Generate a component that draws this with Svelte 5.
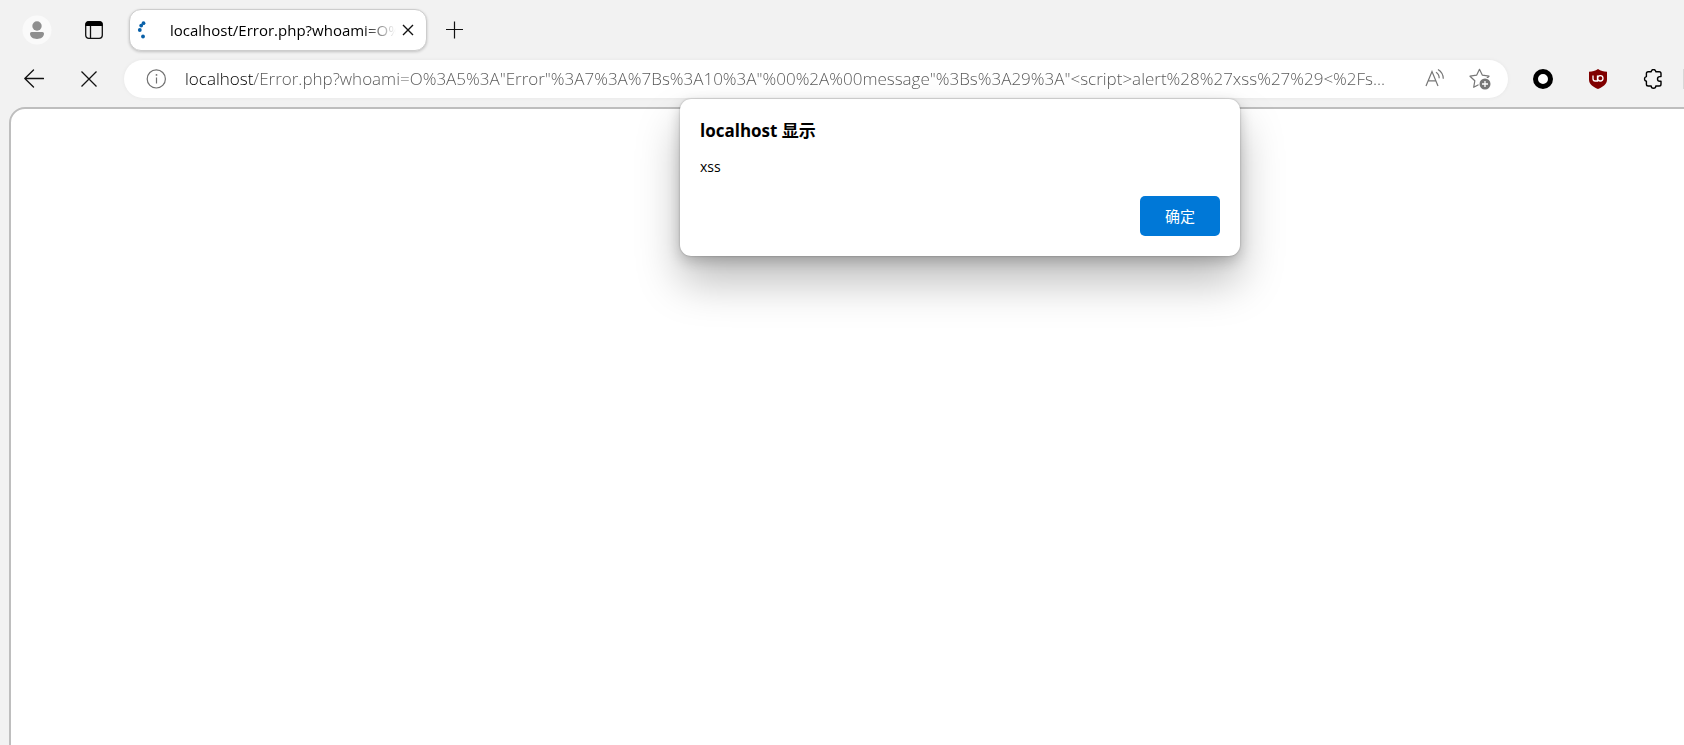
<script>
  const tabTitle = 'localhost/Error.php?whoami=O%';
  let url = $state(
    'localhost/Error.php?whoami=O%3A5%3A"Error"%3A7%3A%7Bs%3A10%3A"%00%2A%00message"%3Bs%3A29%3A"<' +
      'script>alert%28%27xss%27%29<%2Fs...'
  );
</script>

<div class="browser">
  <header>
    <div class="tabs">
      <button class="avatar" aria-label="Profile">
        <svg width="30" height="30" viewBox="0 0 30 30">
          <circle cx="15" cy="15" r="14.5" fill="#fafafa" />
          <circle cx="15" cy="11" r="4.7" fill="#8f8f8f" />
          <path d="M9.6 17h10.8q1.6 0 1.6 1.6c0 3.6-3 5.4-7 5.4s-7-1.800-7-5.400q0-1.600 1.600-1.600z" fill="#8f8f8f" />
        </svg>
      </button>
      <button class="actions" aria-label="Tab actions">
        <svg width="20" height="20" viewBox="0 0 20 20">
          <rect x="1.700" y="1.700" width="16.600" height="16.600" rx="3" fill="none" stroke="#111" stroke-width="1.300" />
          <path d="M1.500 6V4.500a3.300 3.300 0 0 1 3.300-3.300h10.400a3.300 3.300 0 0 1 3.300 3.300V6z" fill="#000" />
          <path d="M6.500 6v12" stroke="#111" stroke-width="1.300" />
        </svg>
      </button>
      <div class="tab">
        <svg width="20" height="20" viewBox="0 0 20 20" fill="#0860a8" aria-hidden="true">
          <circle cx="13.500" cy="3.200" r="1.900" />
          <circle cx="11.200" cy="5.600" r="1.900" />
          <circle cx="9.800" cy="10" r="1.900" />
          <circle cx="13" cy="16.500" r="1.900" />
        </svg>
        <span class="title">{tabTitle}</span>
        <button aria-label="Close tab">
          <svg width="12" height="12" viewBox="0 0 12 12">
            <path d="M1 1l10 10M11 1L1 11" stroke="#111" stroke-width="1.400" />
          </svg>
        </button>
      </div>
      <button class="new" aria-label="New tab">
        <svg width="18" height="18" viewBox="0 0 18 18">
          <path d="M8.500 .5v17M0 8.500h17" stroke="#111" stroke-width="1.200" />
        </svg>
      </button>
    </div>

    <div class="toolbar">
      <button aria-label="Back">
        <svg width="20" height="20" viewBox="0 0 20 20" fill="none" stroke="#111" stroke-width="1.300" stroke-linecap="round" stroke-linejoin="round">
          <path d="M9.500 1L.8 9.500l8.700 8.500M.8 9.500h18.700" />
        </svg>
      </button>
      <button class="stop" aria-label="Stop loading">
        <svg width="18" height="18" viewBox="0 0 18 18">
          <path d="M1.500 1.500l15 15M16.500 1.500l-15 15" stroke="#111" stroke-width="1.300" />
        </svg>
      </button>
      <div class="address">
        <button aria-label="Site information">
          <svg width="20" height="20" viewBox="0 0 20 20">
            <circle cx="10.300" cy="9.900" r="9.100" fill="none" stroke="#707070" stroke-width="1.200" />
            <path d="M10.500 8.500v6" stroke="#707070" stroke-width="1.200" />
            <circle cx="10.500" cy="5.900" r=".9" fill="#707070" />
          </svg>
        </button>
        <input type="text" aria-label="Address" spellcheck="false" bind:value={url} />
        <button aria-label="Read aloud">
          <svg width="20" height="20" viewBox="0 0 20 20" fill="none" stroke="#767676" stroke-width="1.200">
            <path d="M1 17L7 2.500 13 17M3.200 11.800h7.600" />
            <path d="M11 3.300q3.200 2 3.200 6M13 .5q5.200 3.200 5.300 9.200" />
          </svg>
        </button>
        <button class="star" aria-label="Add to favorites">
          <svg width="22" height="22" viewBox="0 0 22 22">
            <path d="M10.500 1.300l2.900 5.900 6.600 1-4.800 4.600 1.100 6.500-5.800-3.100-5.800 3.100 1.100-6.500L1 8.200l6.600-1z" fill="none" stroke="#767676" stroke-width="1.200" stroke-linejoin="round" />
            <circle cx="16" cy="16" r="6.600" fill="#fff" />
            <circle cx="16" cy="16" r="5.500" fill="#767676" />
            <path d="M16 13v6M13 16h6" stroke="#fff" stroke-width="1.300" />
          </svg>
        </button>
      </div>
      <div class="extensions">
        <button aria-label="Ring extension">
          <svg width="20" height="20" viewBox="0 0 20 20">
            <circle cx="10" cy="10" r="7.500" fill="#fff" stroke="#000" stroke-width="5" />
          </svg>
        </button>
        <button aria-label="Content blocker">
          <svg width="20" height="20" viewBox="0 0 20 20">
            <path d="M10 0c2.700 2 5.500 2.700 9 2.800v7.700c0 4.700-4 7.500-9 9.500-5-2-9-4.800-9-9.500V2.800C4.500 2.700 7.300 2 10 0z" fill="#800000" />
            <path d="M5 6.500v3.200q0 2.300 2.200 2.300h2.300V6.500" fill="none" stroke="#fff" stroke-width="1.300" />
            <circle cx="12.300" cy="9.300" r="2.700" fill="none" stroke="#fff" stroke-width="1.300" />
          </svg>
        </button>
        <button aria-label="Extensions">
          <svg width="20" height="20" viewBox="0 0 20 20" fill="none" stroke="#000" stroke-width="1.400" stroke-linejoin="round">
            <path d="M5.200 2.800h3a2.300 2.300 0 0 1 4.600 0h3.400q1.800 0 1.800 1.800v3h-1.200a2.300 2.300 0 0 0 0 4.600H18v3q0 1.800-1.800 1.800h-3.400a2.300 2.300 0 0 1-4.600 0h-3q-1.800 0-1.800-1.800v-2.900a2.400 2.400 0 0 1 0-4.700v-3q0-1.800 1.800-1.800z" />
          </svg>
        </button>
      </div>
      <span class="divider"></span>
    </div>
  </header>

  <main></main>

  <div class="dialog" role="alertdialog" aria-labelledby="dialog-title" aria-describedby="dialog-text">
    <h1 id="dialog-title">localhost 显示</h1>
    <p id="dialog-text">xss</p>
    <button>确定</button>
  </div>
</div>

<style>
  :global(body) {
    margin: 0;
    background: #f2f2f2;
  }

  .browser {
    position: relative;
    display: flex;
    flex-direction: column;
    min-height: 100vh;
    overflow: hidden;
    color: #000;
    font-family: "Open Sans", "Noto Sans CJK SC", sans-serif;
  }

  .browser * {
    box-sizing: border-box;
  }

  button {
    flex: none;
    display: flex;
    align-items: center;
    justify-content: center;
    padding: 0;
    border: 0;
    background: none;
    font: inherit;
  }

  .tabs {
    display: flex;
    align-items: center;
    height: 60px;
    padding-left: 22px;
  }

  .avatar {
    margin-right: 32px;
  }

  .actions {
    margin-right: 25px;
  }

  .tab {
    display: flex;
    align-items: center;
    width: 298px;
    height: 42px;
    padding: 0 12px 0 0;
    border: 1px solid #cdcdcd;
    border-radius: 12px;
    background: #fff;
    box-shadow: 0 1px 3px rgb(0 0 0 / 20%);
  }

  .title {
    flex: 1;
    min-width: 0;
    margin: 0 2px 0 20px;
    overflow: hidden;
    font-size: 15px;
    line-height: 22px;
    white-space: nowrap;
    mask-image: linear-gradient(to right, #000 calc(100% - 38px), transparent calc(100% - 4px));
  }

  .new {
    margin-left: 19px;
  }

  .toolbar {
    display: flex;
    align-items: center;
    height: 38px;
    padding-left: 24px;
  }

  .stop {
    margin: 0 26px 0 36px;
  }

  .address {
    flex: 1;
    display: flex;
    align-items: center;
    min-width: 0;
    height: 38px;
    padding: 0 17px 0 22px;
    border-radius: 19px;
    background: #fff;
    box-shadow: 0 0 4px rgb(0 0 0 / 5%);
  }

  input {
    flex: 1;
    min-width: 0;
    height: 28px;
    margin: 0 16px 2px 19px;
    padding: 0;
    border: 0;
    outline: 0;
    background: linear-gradient(to right, #000 69px, #555 69px);
    background-clip: text;
    color: transparent;
    caret-color: #000;
    font: 300 17px "Open Sans", "Noto Sans CJK SC", sans-serif;
  }

  .star {
    margin-left: 24px;
  }

  .extensions {
    display: flex;
    gap: 35px;
    margin: 0 20px 0 25px;
  }

  .divider {
    width: 1px;
    height: 20px;
    background: #d8d8d8;
  }

  main {
    flex: 1;
    margin: 9px -20px -20px 9px;
    border: 2px solid #bebebe;
    border-radius: 16px;
    background: #fff;
  }

  .dialog {
    position: absolute;
    top: 99px;
    left: 680px;
    display: flex;
    flex-direction: column;
    width: 560px;
    padding: 20px;
    border-radius: 11px;
    background: #fff;
    box-shadow: 0 0 2px rgb(0 0 0 / 30%), 0 5px 14px rgb(0 0 0 / 20%), 0 26px 44px rgb(0 0 0 / 26%);
  }

  h1 {
    margin: 0;
    font-size: 17px;
    font-weight: 700;
    line-height: 24px;
  }

  p {
    margin: 13px 0 18px;
    font-size: 14px;
    line-height: 22px;
  }

  .dialog button {
    align-self: flex-end;
    width: 80px;
    height: 40px;
    padding-bottom: 2px;
    border-radius: 5px;
    background: #0078d7;
    color: #fff;
    font-size: 15px;
  }
</style>
